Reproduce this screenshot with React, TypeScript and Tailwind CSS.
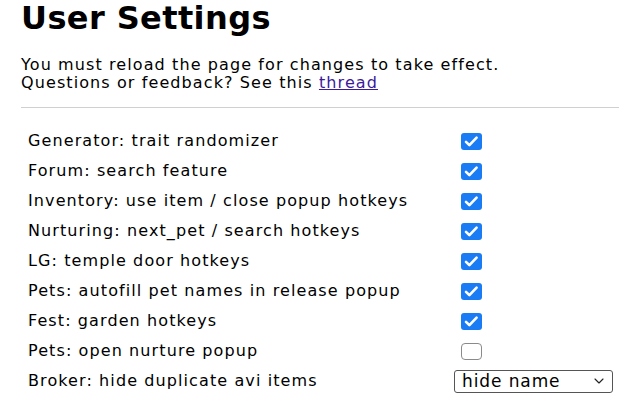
import { ChevronDown } from "lucide-react";

type Setting = {
  label: string;
  checked?: boolean;
  select?: string;
};

const settings: Setting[] = [
  { label: "Generator: trait randomizer", checked: true },
  { label: "Forum: search feature", checked: true },
  { label: "Inventory: use item / close popup hotkeys", checked: true },
  { label: "Nurturing: next_pet / search hotkeys", checked: true },
  { label: "LG: temple door hotkeys", checked: true },
  { label: "Pets: autofill pet names in release popup", checked: true },
  { label: "Fest: garden hotkeys", checked: true },
  { label: "Pets: open nurture popup", checked: false },
  { label: "Broker: hide duplicate avi items", select: "hide name" },
];

function Checkbox({ checked }: { checked?: boolean }) {
  if (!checked) {
    return (
      <div className="ml-[7px] h-[17px] w-[21px] rounded-[4px] border border-[#8a8a8a] bg-white" />
    );
  }
  return (
    <div className="ml-[7px] flex h-[17px] w-[21px] items-center justify-center rounded-[3px] bg-[#1a7cf5]">
      <svg viewBox="0 0 21 17" className="h-[17px] w-[21px]">
        <polyline
          points="5,8.8 8.4,12.2 15.6,4.6"
          fill="none"
          stroke="white"
          strokeWidth="2.6"
          strokeLinecap="round"
          strokeLinejoin="round"
        />
      </svg>
    </div>
  );
}

function Select({ value }: { value: string }) {
  return (
    <div className="flex h-[23px] w-[159px] items-center justify-between rounded-[3px] border border-[#555] bg-white pl-[7px] pr-[5px]">
      <span className="text-[17px] leading-none tracking-[0.9px] text-black">{value}</span>
      <ChevronDown className="h-[16px] w-[16px] text-[#222]" strokeWidth={1.7} />
    </div>
  );
}

export default function App() {
  return (
    <div
      className="min-h-[400px] w-[640px] bg-white px-[21px] text-black"
      style={{ fontFamily: '"DejaVu Sans", "Noto Sans", sans-serif' }}
    >
      <h1 className="pt-[1px] text-[32px] font-bold leading-[34px] tracking-[0.4px]">User Settings</h1>
      <p className="mt-[21px] text-[16px] leading-[18px] tracking-[1.1px]">
        You must reload the page for changes to take effect.
        <br />
        Questions or feedback? See this{" "}
        <a href="#" className="text-[#3b1a9b] underline">
          thread
        </a>
      </p>
      <hr className="mt-[15px] border-t border-[#d0d0d0]" />
      <div className="mt-[18px] pl-[7px]">
        {settings.map((s) => (
          <div key={s.label} className="grid h-[30px] grid-cols-[426px_1fr] items-center">
            <span className="text-[16px] tracking-[1.1px]">{s.label}</span>
            <div className="flex items-center">
              {s.select ? <Select value={s.select} /> : <Checkbox checked={s.checked} />}
            </div>
          </div>
        ))}
      </div>
    </div>
  );
}
